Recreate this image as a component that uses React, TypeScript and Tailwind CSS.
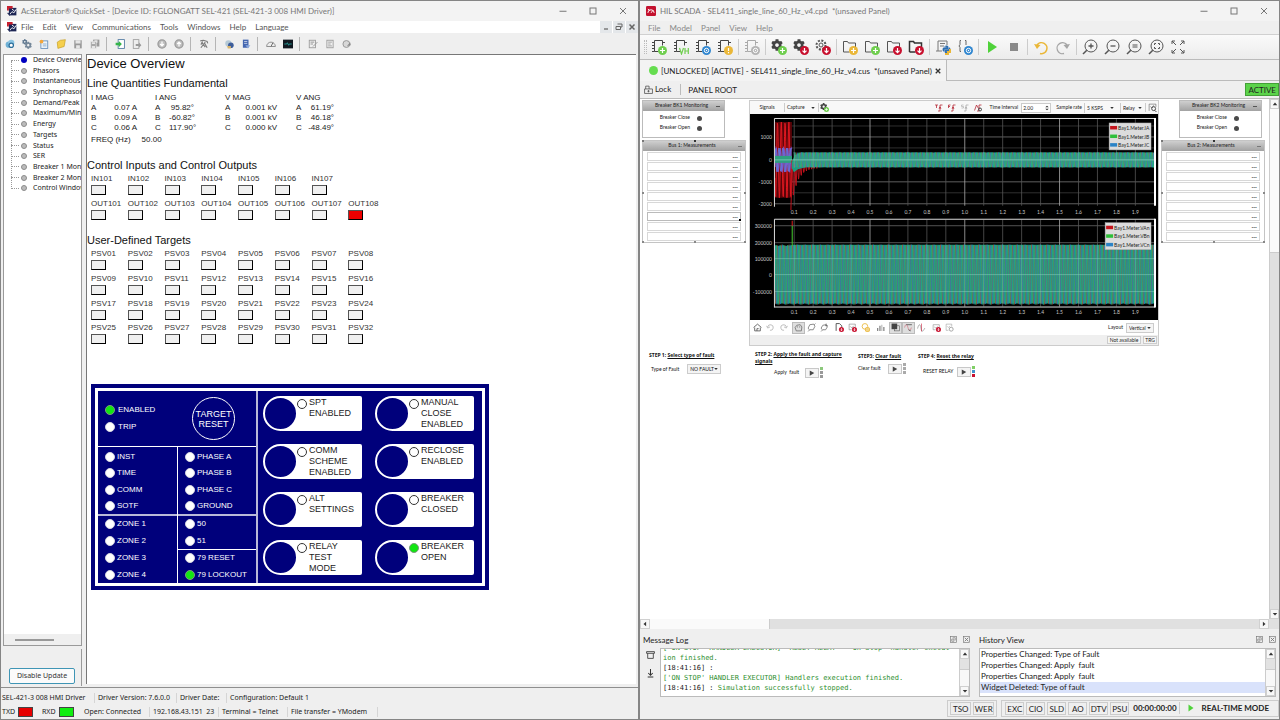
import React, { useMemo, useState } from 'react';
import { FaCog, FaPython } from 'react-icons/fa';
import { clsx } from 'clsx';

type IconProps = { children: React.ReactNode; className?: string };

const Svg: React.FC<IconProps> = ({ children, className }) => (
  <svg viewBox="0 0 16 16" className={clsx('shrink-0', className ?? 'w-4 h-4')} fill="none" aria-hidden="true">
    {children}
  </svg>
);

/* ---------- shared window chrome ---------- */

const WindowControls = () => (
  <div className="flex h-full items-center text-[#777]">
    <button type="button" aria-label="Minimize" className="w-[30px] flex justify-center">
      <Svg className="w-2 h-2"><path d="M1 8.5h14" stroke="currentColor" strokeWidth="2" /></Svg>
    </button>
    <button type="button" aria-label="Maximize" className="w-[30px] flex justify-center">
      <Svg className="w-2 h-2"><rect x="2" y="2" width="12" height="12" stroke="currentColor" strokeWidth="2" /></Svg>
    </button>
    <button type="button" aria-label="Close" className="w-[30px] flex justify-center">
      <Svg className="w-2 h-2"><path d="M2 2l12 12M14 2L2 14" stroke="currentColor" strokeWidth="2" /></Svg>
    </button>
  </div>
);

const SelLogo = () => (
  <Svg className="w-[10px] h-[10px]">
    <rect x="3" y="3" width="12" height="12" fill="#1c2554" />
    <path d="M0 0h9v4H3v3H0z" fill="#c8202f" />
    <path d="M4 14l4-5 3 2 4-6M8 5l4 3" stroke="#fff" strokeWidth="1.4" />
    <path d="M1 11l4 4" stroke="#1c2554" strokeWidth="2" />
  </Svg>
);

/* ---------- QuickSet toolbar ---------- */

const Gray = '#9a9a9a';

const quickSetIcons: { name: string; icon: React.ReactNode }[][] = [
  [
    { name: 'Connect', icon: <><circle cx="6" cy="9" r="5" fill="#6fb1d6" /><circle cx="10" cy="6" r="5" fill="#8cc5e3" /><circle cx="10" cy="10" r="3.5" fill="#fff" stroke="#2c6f9c" strokeWidth="2" /></> },
    { name: 'Settings', icon: <><FaCog x="0" y="0" size={9} color="#5f7890" /><FaCog x="4" y="4" size={12} color="#75889a" /></> },
    { name: 'New', icon: <><rect x="3" y="3" width="11" height="12" fill="#eef5fb" stroke="#5b87b5" strokeWidth="1.3" /><path d="M6 8h6M6 11h6" stroke="#5b87b5" /><circle cx="4" cy="4" r="3" fill="#f4a63a" /></> },
    { name: 'Open', icon: <path d="M2 5l5-3 8-1-2 11-10 3z" fill="#f5cf4d" stroke="#c29a1c" /> },
    { name: 'Save', icon: <><path d="M2 2h12v13H2z" fill={Gray} /><path d="M4 2h8v5H4zM5 10h6v5H5z" fill="#e6e6e6" /></> },
    { name: 'Save All', icon: <><path d="M5 1h10v11H5z" fill={Gray} /><path d="M7 2h5v4H7z" fill="#e6e6e6" /><path d="M1 4h9v11H1z" fill="#a8a8a8" stroke="#eee" /><path d="M3 5h5v3H3zM3 11h5v4H3z" fill="#e6e6e6" /></> },
  ],
  [
    { name: 'Read', icon: <><rect x="5" y="1" width="10" height="14" fill="#fff" stroke="#46719b" strokeWidth="1.3" /><path d="M1 6h5V3l5 5-5 5v-3H1z" fill="#35b44a" /></> },
    { name: 'Send', icon: <><rect x="2" y="1" width="9" height="14" fill="#eee" stroke={Gray} strokeWidth="1.3" /><path d="M6 8h5V5l4 5-4 4v-3H6z" fill={Gray} /></> },
  ],
  [
    { name: 'Back', icon: <><circle cx="8" cy="8" r="6.5" fill="#bdbdbd" stroke={Gray} strokeWidth="2" /><path d="M8 4v7M5 8l3 3 3-3" stroke="#fff" strokeWidth="2" /></> },
    { name: 'Forward', icon: <><circle cx="8" cy="8" r="6.5" fill="#bdbdbd" stroke={Gray} strokeWidth="2" /><path d="M8 12V5M5 8l3-3 3 3" stroke="#fff" strokeWidth="2" /></> },
  ],
  [{ name: 'Search', icon: <path d="M2 3l5-1 6 2 1 3M4 5l6 8M10 5L3 14M9 7l4 7M6 4l-3 5" stroke="#7d7d7d" strokeWidth="1.8" /> }],
  [
    { name: 'Terminal', icon: <><circle cx="7" cy="7" r="5" fill="#b5c9d6" /><circle cx="11" cy="10" r="4.5" fill="#3d5e9b" /><path d="M5 11h6v4H6z" fill="#d9b46b" /></> },
    { name: 'Database', icon: <><rect x="3" y="1" width="9" height="13" fill="#4466b0" /><path d="M5 4h5M5 7h5" stroke="#fff" /><path d="M7 10l4 5 4-5z" fill="#8ba8dc" /></> },
  ],
  [
    { name: 'HMI', icon: <><path d="M1 12a7 7 0 0114 0z" fill="#eee" stroke="#8b8b8b" strokeWidth="1.5" /><path d="M8 12l3-6" stroke="#666" strokeWidth="1.5" /></> },
    { name: 'Console', icon: <><rect x="0" y="1" width="16" height="14" fill="#101820" /><path d="M2 8h4l1-2 2 4 1-2h4" stroke="#28a6a0" strokeWidth="1.3" /></> },
  ],
  [
    { name: 'Edit', icon: <><rect x="2" y="2" width="10" height="12" stroke={Gray} strokeWidth="1.4" /><path d="M4 5h6M4 8h4M8 12l7-7" stroke={Gray} strokeWidth="1.6" /></> },
    { name: 'Report', icon: <><rect x="3" y="2" width="10" height="12" stroke={Gray} strokeWidth="1.4" /><path d="M5 5h6M5 8h4M5 11h6" stroke={Gray} strokeWidth="1.4" /></> },
    { name: 'Options', icon: <><circle cx="7" cy="8" r="5.5" fill="#d8d8d8" stroke={Gray} strokeWidth="1.6" /><path d="M8 11l5-6 1 5z" fill="#8a8a8a" /></> },
  ],
];

const treeItems = [
  'Device Overview', 'Phasors', 'Instantaneous', 'Synchrophasors', 'Demand/Peak', 'Maximum/Minimum', 'Energy',
  'Targets', 'Status', 'SER', 'Breaker 1 Monitor', 'Breaker 2 Monitor', 'Control Window',
];

const quantities = [
  ['A', '0.07 A', '95.82°', '0.001 kV', '61.19°'],
  ['B', '0.09 A', '-60.82°', '0.001 kV', '46.18°'],
  ['C', '0.06 A', '117.90°', '0.000 kV', '-48.49°'],
];

const inputs = ['IN101', 'IN102', 'IN103', 'IN104', 'IN105', 'IN106', 'IN107'];
const outputs = ['OUT101', 'OUT102', 'OUT103', 'OUT104', 'OUT105', 'OUT106', 'OUT107', 'OUT108'];
const targets = Array.from({ length: 32 }, (_, i) => `PSV${String(i + 1).padStart(2, '0')}`);

const Indicator: React.FC<{ label: string; on?: boolean }> = ({ label, on }) => (
  <div className="text-[8px] leading-[10px] text-[#333]">
    <div>{label}</div>
    <div
      className={clsx(
        'w-[15px] h-[10px] mt-px border border-[#555] border-b-black border-r-black',
        on ? 'bg-[#ee0000]' : 'bg-[#f0f0f0]'
      )}
    />
  </div>
);

const Led: React.FC<{ on?: boolean; outlined?: boolean }> = ({ on, outlined }) => (
  <span
    className={clsx(
      'block w-[10px] h-[10px] shrink-0 rounded-full border',
      on ? 'bg-[#12e612] border-[#7d9a7d]' : 'bg-white',
      !on && (outlined ? 'border-[#333]' : 'border-[#d5d5e0]')
    )}
  />
);

const LedRow: React.FC<{ label: string; on?: boolean }> = ({ label, on }) => (
  <div className="flex items-center gap-[2px] pl-[7px]">
    <Led on={on} />
    <span>{label}</span>
  </div>
);

const frontButtons = [
  { lines: ['SPT', 'ENABLED'] },
  { lines: ['MANUAL', 'CLOSE', 'ENABLED'] },
  { lines: ['COMM', 'SCHEME', 'ENABLED'] },
  { lines: ['RECLOSE', 'ENABLED'] },
  { lines: ['ALT', 'SETTINGS'] },
  { lines: ['BREAKER', 'CLOSED'] },
  { lines: ['RELAY', 'TEST', 'MODE'] },
  { lines: ['BREAKER', 'OPEN'], on: true },
];

const FrontPanel = () => (
  <div className="w-[398px] bg-[#00007b] p-1 text-white">
    <div className="flex border-[3px] border-white h-[198px]">
      <div className="w-[160px] flex flex-col border-r-2 border-[#b9b9d8] text-[8px] leading-[10px]">
        <div className="h-[56px] flex justify-between border-b border-white pr-[21px]">
          <div className="pt-[14px] pl-[7px] flex flex-col gap-[7px]">
            <div className="flex items-center gap-[3px]"><Led on /><span>ENABLED</span></div>
            <div className="flex items-center gap-[3px]"><Led /><span>TRIP</span></div>
          </div>
          <button type="button" className="mt-[6px] w-[43px] h-[43px] rounded-full border border-white text-[9px] leading-[10px]">
            TARGET<br />RESET
          </button>
        </div>
        <div className="flex-1 flex">
          <div className="w-[80px] flex flex-col border-r border-white">
            <div className="h-[69px] pt-[2px] grid grid-rows-4 border-b-2 border-[#b9b9d8]">
              <LedRow label="INST" /><LedRow label="TIME" /><LedRow label="COMM" /><LedRow label="SOTF" />
            </div>
            <div className="flex-1 grid grid-rows-4">
              <LedRow label="ZONE 1" /><LedRow label="ZONE 2" /><LedRow label="ZONE 3" /><LedRow label="ZONE 4" />
            </div>
          </div>
          <div className="flex-1 flex flex-col">
            <div className="h-[69px] pt-[2px] grid grid-rows-4 border-b-2 border-[#b9b9d8]">
              <LedRow label="PHASE A" /><LedRow label="PHASE B" /><LedRow label="PHASE C" /><LedRow label="GROUND" />
            </div>
            <div className="flex-1 grid grid-rows-2 border-b border-white">
              <LedRow label="50" /><LedRow label="51" />
            </div>
            <div className="flex-1 grid grid-rows-2">
              <LedRow label="79 RESET" /><LedRow label="79 LOCKOUT" on />
            </div>
          </div>
        </div>
      </div>
      <div className="flex-1 grid grid-cols-2 grid-rows-4 gap-x-[13px] gap-y-[13px] pl-[5px] pr-[8px] pt-[5px] pb-[8px]">
        {frontButtons.map(b => (
          <div key={b.lines.join(' ')} className="flex">
            <button
              type="button"
              aria-label={b.lines.join(' ')}
              className="z-10 -mr-[18px] w-[35px] h-[35px] shrink-0 rounded-full bg-[#00007b] border-2 border-white"
            />
            <div className="flex-1 flex gap-[2px] bg-white text-[#222] rounded-[2px] pl-[17px]">
              <div className="pt-[3px]"><Led on={b.on} outlined /></div>
              <div className="pt-px text-[9px] leading-[11px]">
                {b.lines.map(l => <div key={l}>{l}</div>)}
              </div>
            </div>
          </div>
        ))}
      </div>
    </div>
  </div>
);

const QuickSetWindow = () => {
  const [selected, setSelected] = useState(0);

  return (
    <section className="w-1/2 flex flex-col bg-[#efefef] border border-[#858585] border-r-2 min-w-0">
      <header className="h-5 flex items-center justify-between bg-[#f3f3f3] pl-[6px] text-[8px] text-[#777]">
        <div className="flex items-center gap-1 whitespace-nowrap">
          <SelLogo />
          <span>AcSELerator® QuickSet - [Device ID: FGLONGATT SEL-421 (SEL-421-3 008 HMI Driver)]</span>
        </div>
        <WindowControls />
      </header>

      <nav className="h-[12px] flex items-center justify-between bg-white pl-[6px] text-[8px] leading-[12px] text-[#555]">
        <div className="flex items-center">
          <SelLogo />
          <div className="flex gap-[9px] pl-1">
            {['File', 'Edit', 'View', 'Communications', 'Tools', 'Windows', 'Help', 'Language'].map(m => (
              <button key={m} type="button">{m}</button>
            ))}
          </div>
        </div>
        <div className="flex gap-px text-[#666]">
          <button type="button" aria-label="Minimize child" className="w-[12px] h-[12px] grid place-items-center bg-[#e4e7ea]">
            <Svg className="w-2 h-2"><path d="M4 12h8" stroke="currentColor" strokeWidth="2.5" /></Svg>
          </button>
          <button type="button" aria-label="Restore child" className="w-[12px] h-[12px] grid place-items-center bg-[#e4e7ea]">
            <Svg className="w-2 h-2"><path d="M5 2h9v6h-3M2 7h9v6H2z" stroke="currentColor" strokeWidth="2" /></Svg>
          </button>
          <button type="button" aria-label="Close child" className="w-[12px] h-[12px] grid place-items-center bg-[#e4e7ea]">
            <Svg className="w-2 h-2"><path d="M3 3l10 10M13 3L3 13" stroke="currentColor" strokeWidth="3" /></Svg>
          </button>
        </div>
      </nav>

      <div className="h-[21px] flex items-center">
        {quickSetIcons.map((group, gi) => (
          <React.Fragment key={gi}>
            {gi > 0 && <div className="w-px h-[14px] bg-[#b5b5b5] ml-[3px] mr-1" />}
            {group.map(({ name, icon }) => (
              <button key={name} type="button" aria-label={name} className="w-[17px] flex justify-center">
                <Svg className="w-[10px] h-[10px]">{icon}</Svg>
              </button>
            ))}
          </React.Fragment>
        ))}
      </div>

      <div className="flex-1 flex">
        <aside className="w-[79px] ml-[2px] pb-px flex flex-col font-['Noto_Sans',sans-serif]">
          <div className="flex-1 flex flex-col border border-[#9a9a9a] bg-white overflow-hidden">
            <div className="flex-1">
              <ul className="relative h-[139px] grid grid-rows-13 text-[7px] leading-[10px] text-[#222]">
                <li aria-hidden="true" className="absolute left-[7px] top-[6px] h-[128px] border-l border-dotted border-[#999]" />
                {treeItems.map((item, i) => (
                  <li key={item} className="overflow-hidden">
                    <button
                      type="button"
                      onClick={() => setSelected(i)}
                      className="w-full flex items-center pl-[7px] whitespace-nowrap"
                    >
                      <span className="w-[8px] shrink-0 border-t border-dotted border-[#999]" />
                      <span
                        className={clsx(
                          'w-[6px] h-[6px] mx-[2px] rounded-full shrink-0',
                          i === selected ? 'bg-[#0000c0]' : 'bg-[#bcbcbc] border border-[#8c8c8c]'
                        )}
                      />
                      <span className="pl-[4px]">{item}</span>
                    </button>
                  </li>
                ))}
              </ul>
            </div>
            <div className="h-[11px] flex items-center bg-[#efefef] pl-[11px]">
              <div className="w-[39px] h-[2px] bg-[#999]" />
            </div>
          </div>
          <div className="h-[37px] mt-[3px] pb-[2px] flex items-end justify-center border-r border-[#9a9a9a]">
            <button type="button" className="w-[66px] h-4 rounded-[2px] border border-[#3f95b5] bg-[#fbfbfb] text-[7px] text-[#333]">
              Disable Update
            </button>
          </div>
        </aside>

        <main className="flex-1 ml-[4px] mr-[2px] mb-[3px] bg-white border-t border-l border-[#777] text-[#111] font-['Liberation_Sans',sans-serif]">
          <h1 className="pt-px text-[13px] leading-[16px]">Device Overview</h1>
          <h2 className="mt-[3px] text-[11px] leading-[16px]">Line Quantities Fundamental</h2>
          <div className="ml-1 text-[8px] leading-[10px] text-[#222]">
            <table className="w-[243px] table-fixed mt-px">
              <colgroup>
                <col className="w-[14px]" /><col className="w-[50px]" />
                <col className="w-[14px]" /><col className="w-[56px]" />
                <col className="w-[14px]" /><col className="w-[57px]" />
                <col className="w-[10px]" /><col className="w-[28px]" />
              </colgroup>
              <thead>
                <tr className="text-left leading-[11px]">
                  {['I MAG', 'I ANG', 'V MAG', 'V ANG'].map(h => <th key={h} colSpan={2} className="font-normal">{h}</th>)}
                </tr>
              </thead>
              <tbody>
                {quantities.map(([p, im, ia, vm, va]) => (
                  <tr key={p}>
                    <td>{p}</td><td className="text-right pr-[18px] whitespace-nowrap">{im}</td>
                    <td>{p}</td><td className="text-right pr-[31px] whitespace-nowrap">{ia}</td>
                    <td>{p}</td><td className="text-right pr-[19px] whitespace-nowrap">{vm}</td>
                    <td>{p}</td><td className="text-right whitespace-nowrap">{va}</td>
                  </tr>
                ))}
              </tbody>
            </table>
            <div className="mt-[2px] flex gap-[11px]"><span>FREQ (Hz)</span><span>50.00</span></div>
          </div>

          <h2 className="mt-[12px] text-[11px] leading-[16px]">Control Inputs and Control Outputs</h2>
          <div className="ml-1 mt-px w-[294px] grid grid-cols-8 gap-y-1">
            {inputs.map(n => <Indicator key={n} label={n} />)}
            <span />
            {outputs.map(n => <Indicator key={n} label={n} on={n === 'OUT108'} />)}
          </div>

          <h2 className="mt-[12px] text-[11px] leading-[16px]">User-Defined Targets</h2>
          <div className="ml-1 mt-px w-[294px] h-[99px] grid grid-cols-8 grid-rows-4">
            {targets.map(n => <Indicator key={n} label={n} />)}
          </div>

          <div className="ml-1 mt-[36px]"><FrontPanel /></div>
        </main>
      </div>

      <footer className="border-t border-[#8f8f8f] pt-[3px] text-[7px] text-[#222] whitespace-nowrap font-['Noto_Sans',sans-serif]">
        <div className="h-[14px] flex items-center">
          <span className="w-[94px] pl-px border-r border-[#d5d5d5]">SEL-421-3 008 HMI Driver</span>
          <span className="w-[82px] pl-[3px] border-r border-[#d5d5d5]">Driver Version: 7.6.0.0</span>
          <span className="w-[50px] pl-[3px] border-r border-[#d5d5d5]">Driver Date:</span>
          <span className="pl-[3px]">Configuration: Default 1</span>
        </div>
        <div className="h-[14px] flex items-center">
          <span className="w-[17px] pl-px">TXD</span>
          <span className="w-[15px] h-[10px] bg-[#e60000] border border-[#444]" />
          <span className="w-[26px] pl-[9px]">RXD</span>
          <span className="w-[15px] h-[10px] bg-[#11ee11] border border-[#444]" />
          <span className="w-[76px] pl-[10px] border-r border-[#d5d5d5]">Open: Connected</span>
          <span className="w-[69px] pl-[3px] border-r border-[#d5d5d5]">192.168.43.151&nbsp; 23</span>
          <span className="w-[69px] pl-[3px] border-r border-[#d5d5d5]">Terminal = Telnet</span>
          <span className="w-[90px] pl-[3px] border-r border-[#d5d5d5]">File transfer = YModem</span>
        </div>
      </footer>
    </section>
  );
};

/* ---------- HIL SCADA toolbar ---------- */

const Chip: React.FC<{ color?: string }> = ({ color = '#444' }) => (
  <g stroke={color} strokeWidth="1">
    <path d="M3.5 1.5h8v5M3.5 1.5v11h4" />
    <path d="M1 3.5h2.500M1 6.500h2.500M1 9.500h2.500M1 12.500h2.500M11.500 3.500H14" strokeWidth="1.200" />
  </g>
);

const Panel: React.FC<{ color?: string; width?: number }> = ({ color = '#555', width = 1 }) => (
  <path d="M1.500 13V2.500h4l1 1.500h7v4M1.500 13h6" stroke={color} strokeWidth={width} />
);

const Badge: React.FC<{ color: string; glyph: 'plus' | 'down' | 'sync' | 'bang' }> = ({ color, glyph }) => (
  <g>
    <circle cx="11.500" cy="11.500" r="4.500" fill={color} />
    {glyph === 'plus' && <path d="M11.500 9v5M9 11.500h5" stroke="#fff" strokeWidth="1.200" />}
    {glyph === 'down' && <path d="M11.500 9v4.500M9.500 11.700l2 2 2-2" stroke="#fff" strokeWidth="1.200" />}
    {glyph === 'sync' && <><circle cx="11.500" cy="11.500" r="2.200" stroke="#fff" /><circle cx="11.500" cy="11.500" r=".7" fill="#fff" /></>}
    {glyph === 'bang' && <path d="M11.500 9v3M11.500 13v1.200" stroke="#fff" strokeWidth="1.200" />}
  </g>
);

const Lens: React.FC<{ children: React.ReactNode }> = ({ children }) => (
  <g stroke="#555" strokeWidth="1">
    <circle cx="9" cy="7" r="6" />
    <path d="M4.800 11.200L1 15" strokeWidth="1.500" />
    {children}
  </g>
);

const green = '#6fce4e';
const red = '#c8102e';
const blue = '#2f86d0';
const amber = '#eab738';

const scadaIcons: { name: string; icon: React.ReactNode }[][] = [
  [
    { name: 'Add model', icon: <><Chip /><Badge color={green} glyph="plus" /></> },
    { name: 'Virtual HIL', icon: <><Chip /><path d="M6.500 9l2 6 2-6M12 9v6M15.300 9v6M12 12h3.300" stroke={green} strokeWidth="1.200" /></> },
    { name: 'Reload model', icon: <><Chip /><Badge color={blue} glyph="sync" /></> },
    { name: 'Model info', icon: <><Chip /><Badge color={amber} glyph="bang" /></> },
  ],
  [{ name: 'Model settings', icon: <><Chip color="#aaa" /><Badge color="#b3b3b3" glyph="sync" /></> }],
  [
    { name: 'Add settings', icon: <><FaCog x="0" y="0" size={12} color="#444" /><Badge color={green} glyph="plus" /></> },
    { name: 'Load settings', icon: <><FaCog x="0" y="0" size={12} color="#444" /><Badge color={red} glyph="down" /></> },
    { name: 'Save settings', icon: <><circle cx="6" cy="6" r="4.500" stroke="#555" strokeWidth="2" strokeDasharray="2 1.500" /><circle cx="6" cy="6" r="2" stroke="#555" /><Badge color={red} glyph="down" /></> },
  ],
  [
    { name: 'New panel', icon: <><Panel /><Badge color={amber} glyph="plus" /></> },
    { name: 'Open panel', icon: <><Panel /><Badge color={green} glyph="plus" /></> },
    { name: 'Save panel', icon: <><Panel /><Badge color={red} glyph="down" /></> },
    { name: 'Save panel as', icon: <><Panel color="#333" width={1.5} /><Badge color={red} glyph="down" /></> },
  ],
  [
    { name: 'Script', icon: <><path d="M3 12V2h9v4M5 4.500h5M5 7h4M1 12h6" stroke="#777" /><FaPython x="7" y="6" size={9} color="#2f6fb0" /><path d="M10 15h3v-2h2v-3" stroke={amber} strokeWidth="2" /></> },
    { name: 'Reload script', icon: <><path d="M4 1.500H3v4L2 7l1 1.500v4h1M8 1.500h1V6" stroke="#666" /><Badge color={blue} glyph="sync" /></> },
  ],
  [
    { name: 'Run', icon: <path d="M4 2l9 6-9 6z" fill="#4fd23a" /> },
    { name: 'Stop', icon: <rect x="4" y="4" width="8" height="8" fill="#8a8a8a" /> },
  ],
  [
    { name: 'Undo', icon: <><path d="M4 6a5.500 5.500 0 113 8.500" stroke={amber} strokeWidth="1.600" /><path d="M1 5l3 5 3.500-4z" fill={amber} /></> },
    { name: 'Redo', icon: <><path d="M12 6a5.500 5.500 0 10-3 8.500" stroke="#a5a5a5" strokeWidth="1.300" /><path d="M15 5l-3 5-3.500-4z" fill="#a5a5a5" /></> },
  ],
  [
    { name: 'Zoom in', icon: <Lens><path d="M9 4.500v5M6.500 7h5" strokeWidth="1.300" /></Lens> },
    { name: 'Zoom out', icon: <Lens><path d="M6.500 7h5" strokeWidth="1.300" /></Lens> },
    { name: 'Zoom reset', icon: <Lens><path d="M6.500 6h5M6.500 8h5" strokeWidth="1.200" /></Lens> },
    { name: 'Zoom fit', icon: <Lens><path d="M6.500 6V4.500H8M10 4.500h1.500V6M11.500 8v1.500H10M8 9.500H6.500V8" /></Lens> },
    { name: 'Full screen', icon: <path d="M2 5V2h3M2 2l4 4M11 2h3v3M14 2l-4 4M14 11v3h-3M14 14l-4-4M5 14H2v-3M2 14l4-4" stroke="#555" /> },
  ],
];

/* ---------- capture plot ---------- */

type Curve = (x: number) => number;

// samples one phase of a sine wave as an SVG polyline
const wave = (from: number, to: number, mid: Curve, amp: Curve, phase: number, period = 3.8) => {
  const pts: string[] = [];
  for (let x = from; x <= to; x += 0.4) {
    pts.push(`${x.toFixed(1)},${(mid(x) - amp(x) * Math.sin((x * 2 * Math.PI) / period + phase)).toFixed(1)}`);
  }
  return pts.join(' ');
};

const xTicks = Array.from({ length: 19 }, (_, i) => i + 1);

// lower edge of the offset current while the fault decays
const decay: Curve = x => 54 + 36 * Math.exp(-(x - 42) / 6);

const Legend: React.FC<{ x: number; y: number; width: number; names: string[] }> = ({ x, y, width, names }) => (
  <g>
    <rect x={x} y={y} width={width} height="27" fill="#dcdcdc" stroke="#aaa" strokeWidth=".5" />
    {names.map((n, i) => (
      <g key={n}>
        <rect x={x + 1} y={y + 3 + i * 8.6} width="7" height="3.500" fill={['#c4141c', '#2fbf3a', '#2b83c6'][i]} />
        <text x={x + 9} y={y + 7 + i * 8.6} fontSize="5" fill="#222">{n}</text>
      </g>
    ))}
  </g>
);

const CapturePlot = () => {
  const current = useMemo(() => {
    const zero: Curve = () => 46;
    const load: Curve = () => 7.5;
    return {
      fault: wave(25, 42, zero, () => 38, 0),
      faultB: wave(25, 42, zero, () => 12, 2),
      faultC: wave(25, 42, zero, () => 12, 4),
      decay: wave(41, 68, x => (46 + decay(x)) / 2, x => (decay(x) - 46) / 2, 0, 2.6),
      a: wave(44, 405, zero, load, 0),
      b: wave(44, 405, zero, load, 2.09),
      c: wave(44, 405, zero, load, 4.19),
    };
  }, []);
  const voltage = useMemo(() => [0, 2.09, 4.19].map(p => wave(25, 405, () => 161, () => 30, p)), []);

  return (
    <svg viewBox="0 0 409 207" className="block w-full bg-black font-['Lato',sans-serif]" role="img" aria-label="Captured currents and voltages">
      {[12, 23, 34, 68, 79, 90].map(y => <path key={y} d={`M25 ${y}H405`} stroke={y === 23 || y === 68 || y === 90 ? '#888' : '#444'} strokeWidth=".7" />)}
      {[112, 129].map(y => <path key={y} d={`M25 ${y}H405`} stroke="#777" strokeWidth=".7" />)}
      {xTicks.map(i => (
        <path
          key={i}
          d={`M${25.3 + i * 19} 5V92M${25.3 + i * 19} 106V193`}
          stroke={i % 5 === 0 ? '#aaa' : '#555'}
          strokeWidth=".8"
        />
      ))}

      {/* fault current, then the decay back to load current */}
      <path d="M25 84V8h17v76z" fill="#5a0408" />
      <polyline points={current.fault} stroke="#e01820" strokeWidth="1" fill="none" />
      <polyline points={current.faultB} stroke="#7a5ad0" strokeWidth="1.200" fill="none" />
      <polyline points={current.faultC} stroke="#5f74d8" strokeWidth="1" fill="none" />
      <rect x="25" y="42" width="17" height="7" fill="#2f9f80" />
      <polyline points={current.decay} stroke="#c0121c" strokeWidth="1" fill="none" />
      <path d="M42 48l3-7 6-2.500H405V53.500H56l-8 2-4 3-2-4z" fill="#1d9a82" />
      <polyline points={current.a} stroke="#b85a48" strokeWidth=".5" fill="none" />
      <polyline points={current.c} stroke="#2f86c8" strokeWidth=".6" fill="none" />
      <polyline points={current.b} stroke="#2bb870" strokeWidth=".7" fill="none" />
      <path d="M25 46H405" stroke="#8fd8c4" strokeWidth=".7" />

      {/* three phase voltages */}
      <path d="M25 132H42V131H405V190H25z" fill="#1b927e" />
      <polyline points={voltage[0]} stroke="#a4583c" strokeWidth=".6" fill="none" />
      <polyline points={voltage[2]} stroke="#2a7fc0" strokeWidth=".6" fill="none" />
      <polyline points={voltage[1]} stroke="#27b070" strokeWidth=".7" fill="none" />
      <path d="M25 145H405M25 161H405M25 178H405" stroke="#7cc8b4" strokeWidth=".6" />
      {xTicks.map(i => <path key={i} d={`M${25.3 + i * 19} 131V190M${25.3 + i * 19} 38V54`} stroke="#8fd0c0" strokeWidth=".5" opacity=".6" />)}
      <path d="M42.300 112v20" stroke="#46d030" strokeWidth="1" />
      <path d="M42.300 107v5" stroke="#e01c1c" strokeWidth="1" />

      <path d="M24.500 93V4.500H406M24.500 194V105.500H406M24.500 193.500H406" stroke="#ddd" fill="none" />
      <path d="M406 4v88M406 105v89" stroke="#fff" strokeWidth="2" />

      <g fontSize="5" fill="#c8c8c8" textAnchor="end">
        <text x="22" y="25">1000</text>
        <text x="22" y="48">0</text>
        <text x="22" y="70">-1000</text>
        <text x="22" y="92">-2000</text>
        <text x="22" y="114">300000</text>
        <text x="22" y="131">200000</text>
        <text x="22" y="147">100000</text>
        <text x="22" y="163">0</text>
        <text x="22" y="180">-100000</text>
      </g>
      <g fontSize="5" fill="#c8c8c8" textAnchor="middle">
        {xTicks.map(i => <text key={i} x={25.3 + i * 19} y="100">{(i / 10).toFixed(1)}</text>)}
        {xTicks.map(i => <text key={i} x={25.3 + i * 19} y="200">{(i / 10).toFixed(1)}</text>)}
      </g>
      <Legend x={360} y={9} width={42} names={['Bay1.Meter.IA', 'Bay1.Meter.IB', 'Bay1.Meter.IC']} />
      <Legend x={356} y={109} width={46} names={['Bay1.Meter.VAn', 'Bay1.Meter.VBn', 'Bay1.Meter.VCn']} />
    </svg>
  );
};

const plotTools: { name: string; icon: React.ReactNode; active?: boolean; gap?: boolean }[] = [
  { name: 'Home', icon: <path d="M1 8l7-6 7 6M3 8v6h10V8M7 14v-4h3" stroke="#555" strokeWidth="1.500" /> },
  { name: 'Previous view', icon: <path d="M3 7a5 5 0 114 6M1 5l2 4 4-2" stroke="#aaa" strokeWidth="1.300" /> },
  { name: 'Next view', icon: <path d="M13 7a5 5 0 10-4 6M15 5l-2 4-4-2" stroke="#aaa" strokeWidth="1.300" /> },
  { name: 'Pan', icon: <path d="M4 14l-2-6 3-4 6-1 3 4-1 7zM6 6v2M10 6v2" stroke="#666" strokeWidth="1.300" />, active: true, gap: true },
  { name: 'Zoom', icon: <path d="M4 12L2 9l3-6 7-1 2 4-3 6H5l-3 3M13 3l2-2" stroke="#666" strokeWidth="1.300" /> },
  { name: 'Zoom region', icon: <path d="M4 12L2 9l3-5 6-1 2 4-3 5H5l-3 3M11 1v5M9 4l5 1" stroke="#666" strokeWidth="1.300" /> },
  { name: 'Export', icon: <><path d="M2 14V1h6l4 4v3" stroke="#444" strokeWidth="1.500" /><Badge color={red} glyph="down" /></>, gap: true },
  { name: 'Import', icon: <><path d="M2 2h11v5M2 2v10h4M4 6l3 3 3-4" stroke="#777" /><Badge color={red} glyph="down" /></> },
  { name: 'Reload', icon: <><circle cx="7" cy="6" r="5" stroke={amber} strokeWidth="1.500" /><Badge color={amber} glyph="sync" /></> },
  { name: 'Statistics', icon: <path d="M2 14V9h2v5zM6 14V5h2v9zM10 14V3h1v11zM13 14V7h2v7z" fill="#777" />, gap: true },
  { name: 'Layers', icon: <><rect x="6" y="5" width="9" height="9" stroke="#555" /><rect x="1" y="1" width="10" height="10" fill="#444" /></>, active: true, gap: true },
  { name: 'Cursor', icon: <><path d="M1 8c2-7 4-7 6 0s4 7 6 0" stroke="#d05868" /><path d="M4 3h10M8 12l4 2" stroke="#555" strokeWidth="1.500" /></>, active: true },
  { name: 'Marker', icon: <><path d="M1 10c2-9 5-9 6-1s3 7 7 0" stroke="#777" /><path d="M8 1v14" stroke={red} /></> },
  { name: 'Save signals', icon: <><path d="M2 3h11v4M2 3v9h4M4 7l3 2 3-3" stroke="#888" /><Badge color={red} glyph="down" /></>, gap: true },
  { name: 'Signal settings', icon: <><path d="M2 2h10v4M2 2v11h4M4 6l2 2 3-3" stroke="#999" /><circle cx="11" cy="11" r="3.500" stroke="#999" strokeWidth="1.500" /></> },
];

const Trigger: React.FC<{ name: string; color: string; letter?: string }> = ({ name, color, letter }) => (
  <button type="button" aria-label={name} className="w-[13px] flex justify-center">
    <Svg className="w-2 h-2">
      {letter === 'F' && <path d="M1 8V2h4M1 5h3" stroke={color} strokeWidth="1.500" />}
      {letter === 'T' && <path d="M0 2h6M3 2v6" stroke={color} strokeWidth="1.500" />}
      {letter === 'S' && <path d="M5 2H1v3h4v3H1" stroke={color} strokeWidth="1.300" />}
      {!letter && <path d="M1 13L5 2l4 7" stroke={color} strokeWidth="1.500" />}
      <path d="M6 14h4V2h5" stroke={color} strokeWidth="1.500" />
      {!letter ? <circle cx="12" cy="11" r="3" stroke="#444" strokeWidth="2" /> : <path d="M7 9l3-4 3 4z" fill={color} />}
    </Svg>
  </button>
);

const Select: React.FC<{ id: string; value: string; label?: string; className: string }> = ({ id, value, label, className }) => (
  <span className={clsx('relative flex items-center h-[10px] border-[#ccc]', className)}>
    <select id={id} aria-label={label} className="appearance-none w-full h-full pl-[2px] leading-[8px] bg-transparent">
      <option>{value}</option>
    </select>
    <Svg className="absolute right-[2px] w-1 h-1 pointer-events-none"><path d="M1 4h14l-7 8z" fill="#333" /></Svg>
  </span>
);

const CaptureWidget = () => (
  <div className="flex-1 min-w-0 mt-px bg-[#efefef] border border-[#ccc] text-[5px] text-[#222]">
    <div className="h-[13px] flex items-center justify-between bg-[#f8f8f8] whitespace-nowrap">
      <div className="flex items-center h-full">
        <button type="button" className="w-[34px]">Signals</button>
        <button type="button" className="flex items-center border-x border-[#ccc] pl-[2px] pr-[3px] h-[9px]">
          Capture
          <Svg className="w-1 h-1 ml-[6px]"><path d="M1 4h14l-7 8z" fill="#333" /></Svg>
        </button>
        <button type="button" aria-label="Capture settings" className="w-[12px] h-[11px] grid place-items-center">
          <Svg className="w-[9px] h-[9px]"><FaCog x="0" y="0" size={13} color="#444" /><Badge color={green} glyph="plus" /></Svg>
        </button>
      </div>
      <div className="flex items-center">
        <Trigger name="Trigger" color="#b3202f" letter="T" />
        <Trigger name="Force trigger" color="#b3202f" letter="F" />
        <Trigger name="Stop capture" color="#aaaaaa" letter="S" />
        <Trigger name="Find trigger" color="#b3202f" />
        <label className="flex items-center gap-[3px] pl-[5px]">
          Time Interval
          <span className="relative flex items-center">
            <input type="text" inputMode="decimal" defaultValue="2.00" className="w-[30px] h-[10px] px-px border border-[#ccc] bg-white" />
            <Svg className="absolute right-[2px] w-[4px] h-[8px] pointer-events-none"><path d="M1 5l7-6 7 6zM1 11l7 6 7-6z" fill="#333" /></Svg>
          </span>
        </label>
        <label htmlFor="sample-rate" className="pl-[5px] pr-[2px]">Sample rate</label>
        <Select id="sample-rate" value="5 KSPS" className="w-[32px] border-l" />
        <Select id="trigger-source" label="Trigger source" value="Relay" className="w-[24px] ml-1 border-l" />
        <button type="button" aria-label="Inspect capture" className="w-[13px] ml-px grid place-items-center border-l border-[#ccc]">
          <Svg className="w-[9px] h-[9px]"><path d="M2 14V2h12v5M4 6l3 3 3-5" stroke="#555" /><circle cx="10" cy="10" r="3.500" stroke="#333" strokeWidth="1.500" /><path d="M12 13l3 3" stroke="#333" strokeWidth="1.500" /></Svg>
        </button>
      </div>
    </div>

    <CapturePlot />

    <div className="h-[15px] flex items-center justify-between bg-white pl-px pr-1">
      <div className="flex items-center">
        {plotTools.map(t => (
          <button
            key={t.name}
            type="button"
            aria-label={t.name}
            className={clsx('w-[13px] h-[12px] grid place-items-center', t.gap && 'ml-[2px]', t.active && 'bg-[#dedede] border border-[#bbb]')}
          >
            <Svg className="w-[9px] h-[9px]">{t.icon}</Svg>
          </button>
        ))}
      </div>
      <div className="flex items-center gap-[3px]">
        <label htmlFor="plot-layout">Layout</label>
        <Select id="plot-layout" value="Vertical" className="w-[28px] border bg-[#f5f5f5]" />
      </div>
    </div>
    <div className="h-[10px] flex items-center justify-end gap-[2px] pr-px">
      <span className="px-[2px] h-[8px] leading-[7px] border border-[#ccc] bg-[#f5f5f5]">Not available</span>
      <span className="px-px h-[8px] leading-[7px] border border-[#ccc] bg-[#f5f5f5]">TRG</span>
    </div>
  </div>
);

const BreakerGroup: React.FC<{ id: string }> = ({ id }) => (
  <div className="w-[83px] h-[38px] border border-[#bbb] bg-white text-[5px] text-[#222]">
    <div className="h-[10px] flex items-center justify-between px-1 bg-linear-to-b from-[#cfcfcf] to-[#a2a2a2]">
      <span className="flex-1 text-center">Breaker {id} Monitoring</span>
      <span className="w-1 h-px bg-[#555]" />
    </div>
    <div className="pt-[2px]">
      {['Breaker Close', 'Breaker Open'].map(n => (
        <div key={n} className="h-[10px] flex items-center justify-end gap-[7px] pr-[22px]">
          <span>{n}</span>
          <span className="w-[5px] h-[5px] rounded-full bg-[#4a4a4a]" />
        </div>
      ))}
    </div>
  </div>
);

const Handle: React.FC<{ className: string }> = ({ className }) => (
  <span className={clsx('absolute w-[2px] h-[2px]', className)} />
);

const BusGroup: React.FC<{ title: string; rowSelected?: boolean }> = ({ title, rowSelected }) => (
  <div className="relative w-[104px] border border-[#c4c4c4] bg-white text-[5px] text-[#222]">
    <Handle className="-left-px -top-px bg-[#777]" />
    <Handle className="left-1/2 -top-px bg-[#333]" />
    <Handle className="-left-px top-1/2 bg-[#888]" />
    <Handle className="-right-px top-1/2 bg-[#888]" />
    <Handle className="-left-px -bottom-px bg-[#888]" />
    <Handle className="left-1/2 -bottom-px bg-[#888]" />
    <Handle className="-right-px -bottom-px bg-[#888]" />
    <div className="h-[10px] flex items-center justify-between px-[3px] bg-linear-to-b from-[#cfcfcf] to-[#a2a2a2]">
      <span className="flex-1 text-center">{title}</span>
      <span className="w-1 h-px bg-[#777]" />
    </div>
    <div className="px-[4px] pt-px pb-px flex flex-col gap-px">
      {Array.from({ length: 9 }, (_, i) => (
        <div
          key={i}
          className={clsx(
            'relative h-[9px] leading-[8px] px-[2px] border text-right font-bold',
            rowSelected && i === 6 ? 'border-[#bbb]' : 'border-[#d8d8d8]'
          )}
        >
          ---
          {rowSelected && i === 6 && <Handle className="-right-px -bottom-px bg-black" />}
        </div>
      ))}
    </div>
  </div>
);

const ScriptButton: React.FC<{ name: string; leds: string[] }> = ({ name, leds }) => (
  <div className="flex items-center gap-px">
    <button type="button" aria-label={name} className="w-[14px] h-[10px] grid place-items-center border border-[#c8c8c8] bg-[#f4f4f4]">
      <Svg className="w-[6px] h-[6px]"><path d="M2 1l12 7-12 7z" fill="#444" /></Svg>
    </button>
    <div className="flex flex-col gap-px">
      {leds.map((c, i) => <span key={i} className={clsx('w-[3px] h-[3px]', c)} />)}
    </div>
  </div>
);

const StepTitle: React.FC<{ step: string; children: React.ReactNode }> = ({ step, children }) => (
  <p className="font-bold font-['Noto_Sans',sans-serif]">{step} <u>{children}</u></p>
);

const Steps = () => (
  <div className="flex items-start pl-[9px] pt-[5px] text-[5px] leading-[7px] text-[#111] whitespace-nowrap">
    <div className="w-[106px] pt-px">
      <StepTitle step="STEP 1:">Select type of fault</StepTitle>
      <div className="mt-[5px] pl-[2px] flex items-center gap-[8px]">
        <label htmlFor="fault-type">Type of Fault</label>
        <Select id="fault-type" value="NO FAULT" className="w-[34px] border bg-[#f4f4f4]" />
      </div>
    </div>
    <div className="w-[103px]">
      <div className="w-[98px] whitespace-normal">
        <StepTitle step="STEP 2:">Apply the fault and capture signals</StepTitle>
      </div>
      <div className="mt-[2px] pl-[19px] flex items-center gap-[6px]">
        <span>Apply&nbsp; fault</span>
        <ScriptButton name="Apply fault" leds={['bg-[#8cc87c]', 'bg-[#999]', 'bg-[#999]']} />
      </div>
    </div>
    <div className="w-[60px] pt-[2px]">
      <StepTitle step="STEP3:">Clear fault</StepTitle>
      <div className="mt-[3px] flex items-center gap-[7px]">
        <span>Clear fault</span>
        <ScriptButton name="Clear fault" leds={['bg-[#aaa]', 'bg-[#aaa]', 'bg-[#aaa]']} />
      </div>
    </div>
    <div className="pt-[2px]">
      <StepTitle step="STEP 4:">Reset the relay</StepTitle>
      <div className="mt-[6px] pl-[5px] flex items-center gap-[4px]">
        <span>RESET RELAY</span>
        <ScriptButton name="Reset relay" leds={['bg-[#7fd065]', 'bg-[#3f92cc]', 'bg-[#c8102e]']} />
      </div>
    </div>
  </div>
);

const Arrow: React.FC<{ dir: 'up' | 'down' | 'left' | 'right' }> = ({ dir }) => (
  <button type="button" aria-label={`Scroll ${dir}`} className="w-full h-[10px] max-w-[10px] grid place-items-center bg-[#f8f8f8] border border-[#d0d0d0] shrink-0">
    <Svg className="w-[6px] h-[6px]">
      {dir === 'up' && <path d="M2 11h12L8 4z" fill="#333" />}
      {dir === 'down' && <path d="M2 5h12l-6 7z" fill="#333" />}
      {dir === 'left' && <path d="M11 2v12L4 8z" fill="#333" />}
      {dir === 'right' && <path d="M5 2v12l7-6z" fill="#333" />}
    </Svg>
  </button>
);

const DockTitle: React.FC<{ title: string }> = ({ title }) => (
  <div className="h-[17px] flex items-center justify-between text-[8px] text-[#222]">
    <h2>{title}</h2>
    <div className="flex gap-[6px] text-[#777]">
      <button type="button" aria-label={`Float ${title}`}>
        <Svg className="w-[7px] h-[7px]"><rect x="1" y="1" width="14" height="14" stroke="currentColor" strokeWidth="1.500" /><path d="M6 4h6v6M4 7h5v5H4z" stroke="currentColor" strokeWidth="1.500" /></Svg>
      </button>
      <button type="button" aria-label={`Close ${title}`}>
        <Svg className="w-[7px] h-[7px]"><rect x="1" y="1" width="14" height="14" stroke="currentColor" strokeWidth="1.500" /><path d="M4 4l8 8M12 4l-8 8" stroke="currentColor" strokeWidth="2" /></Svg>
      </button>
    </div>
  </div>
);

const DockScroll = () => (
  <div className="w-[10px] flex flex-col bg-[#f8f8f8] border-l border-[#ccc]">
    <Arrow dir="up" />
    <div className="h-[11px] bg-[#e2e2e2] border-b border-[#ccc]" />
    <div className="flex-1" />
    <Arrow dir="down" />
  </div>
);

const history = [
  'Properties Changed: Type of Fault',
  'Properties Changed: Apply\u00a0 fault',
  'Properties Changed: Apply\u00a0 fault',
  'Widget Deleted: Type of fault',
];

const ScadaWindow = () => (
  <section className="w-1/2 flex flex-col bg-[#efefef] border-y border-r border-[#858585] min-w-0">
    <header className="h-5 flex items-center justify-between bg-[#f3f3f3] pl-[6px] text-[8px] text-[#777]">
      <div className="flex items-center gap-1 whitespace-nowrap">
        <Svg className="w-[10px] h-[10px]">
          <rect width="16" height="16" rx="2" fill="#c4122f" />
          <path d="M3 11a5 5 0 0110 0M8 11l3-4M3 5l3 2" stroke="#fff" strokeWidth="1.500" />
        </Svg>
        <span>HIL SCADA - SEL411_single_line_60_Hz_v4.cpd&nbsp; *(unsaved Panel)</span>
      </div>
      <WindowControls />
    </header>

    <nav className="h-[13px] flex items-center gap-[9px] pl-[8px] text-[8px] leading-[12px] text-[#888]">
      {['File', 'Model', 'Panel', 'View', 'Help'].map(m => <button key={m} type="button">{m}</button>)}
    </nav>

    <div className="h-[26px] flex items-center border-y border-[#d0d0d0] border-b-[#bbb] bg-linear-to-b from-[#fafafa] to-[#ececec] pl-1">
      <span className="w-[3px] h-[14px] border-x border-dotted border-[#bbb] mr-px" />
      {scadaIcons.map((group, gi) => (
        <React.Fragment key={gi}>
          {gi > 0 && <span className="w-px h-4 bg-[#ccc] mx-[2px]" />}
          {group.map(({ name, icon }) => (
            <button key={name} type="button" aria-label={name} className="w-[22px] flex justify-center">
              <Svg>{icon}</Svg>
            </button>
          ))}
        </React.Fragment>
      ))}
    </div>

    <div className="h-[21px] flex text-[8px] text-[#222]">
      <div className="w-[307px] flex items-center gap-[3px] pl-[9px] bg-[#f3f3f3] border-r border-[#bbb] whitespace-nowrap">
        <span className="w-[9px] h-[9px] shrink-0 rounded-full bg-[#66dd50]" />
        <span>[UNLOCKED] [ACTIVE] - SEL411_single_line_60_Hz_v4.cus&nbsp; *(unsaved Panel)</span>
        <button type="button" aria-label="Close panel">
          <Svg className="w-[6px] h-[6px]"><path d="M2 2l12 12M14 2L2 14" stroke="#333" strokeWidth="3.500" /></Svg>
        </button>
      </div>
      <div className="flex-1 border-b border-[#bbb]" />
    </div>

    <div className="h-[17px] flex items-center justify-between text-[8px] text-[#222]">
      <div className="flex items-center pl-[4px]">
        <button type="button" className="flex items-center gap-[2px] pr-[9px] border-r border-[#bbb] leading-[11px]">
          <Svg className="w-[9px] h-[9px]"><path d="M3 7V2h6v5M1 7h14v8H1zM8 9v4M6 11h4" stroke="#444" strokeWidth="1.300" /></Svg>
          Lock
        </button>
        <span className="pl-[7px]">PANEL ROOT</span>
      </div>
      <span className="h-[13px] px-[2px] leading-[12px] bg-[#5bd34a] border border-[#43a037]">ACTIVE</span>
    </div>

    <div className="flex-1 flex border-t border-[#bbb]">
      <main className="flex-1 min-w-0 bg-white">
        <div className="flex items-start">
          <div className="pl-[2px] pr-[3px] pt-px flex flex-col gap-[2px]">
            <BreakerGroup id="BK1" />
            <BusGroup title="Bus 1: Measurements" rowSelected />
          </div>
          <CaptureWidget />
          <div className="pl-[2px] pr-1 pt-px flex flex-col items-end gap-[2px]">
            <div className="pr-[3px]"><BreakerGroup id="BK2" /></div>
            <BusGroup title="Bus 2: Measurements" />
          </div>
        </div>
        <Steps />
      </main>
      <div className="w-[10px] flex flex-col bg-[#e0e0e0] border-l border-[#ccc]">
        <Arrow dir="up" />
        <div className="h-[144px] bg-[#fafafa] border-b border-[#ccc]" />
        <div className="flex-1" />
        <Arrow dir="down" />
      </div>
    </div>
    <div className="h-[10px] flex bg-[#e0e0e0] pr-[10px]">
      <Arrow dir="left" />
      <div className="w-[120px] bg-[#fafafa] border-r border-[#ccc]" />
      <div className="flex-1" />
      <Arrow dir="right" />
    </div>

    <div className="flex pt-[2px] px-[3px] gap-[9px]">
      <div className="w-[327px]">
        <DockTitle title="Message Log" />
        <div className="flex h-[49px]">
          <div className="w-[17px] pt-[2px] flex flex-col gap-2">
            <button type="button" aria-label="Clear log">
              <Svg className="w-[9px] h-[10px] ml-[3px]"><path d="M1 2h14v3H1zM3 5v9h10V5" stroke="#444" strokeWidth="1.600" /></Svg>
            </button>
            <button type="button" aria-label="Scroll to end">
              <Svg className="w-[9px] h-[10px] ml-[3px]"><path d="M8 1v10M4 8l4 4 4-4M3 15h10" stroke="#333" strokeWidth="1.800" /></Svg>
            </button>
          </div>
          <div className="flex-1 flex border border-[#bbb] bg-white min-w-0">
            <div className="flex-1 flex flex-col justify-end overflow-hidden pl-[2px] pb-[3px] text-[7px] leading-[10px] text-[#2f8f2f] whitespace-pre font-['DejaVu_Sans_Mono',monospace]">
              <div>{"['ON STOP' HANDLER EXECUTOR] 'RESET RELAY'  'On Stop' handler execut"}</div>
              <div>ion finished.</div>
              <div className="text-[#222]">[18:41:16] :</div>
              <div>{"['ON STOP' HANDLER EXECUTOR] Handlers execution finished."}</div>
              <div><span className="text-[#222]">[18:41:16] : </span>Simulation successfully stopped.</div>
            </div>
            <DockScroll />
          </div>
        </div>
      </div>
      <div className="flex-1 min-w-0">
        <DockTitle title="History View" />
        <div className="flex h-[49px] border border-[#bbb] bg-white">
          <ul className="flex-1 text-[8px] leading-[11px] text-[#222]">
            {history.map((h, i) => (
              <li key={i} className={clsx('pl-px', i === 3 && 'bg-[#d9e2fb]')}>{h}</li>
            ))}
          </ul>
          <DockScroll />
        </div>
      </div>
    </div>

    <footer className="h-[22px] flex items-center justify-end gap-1 text-[8px] text-[#222] whitespace-nowrap">
      <div className="h-[17px] flex items-center gap-[2px] px-[2px] border border-[#ccc]">
        {['TSO', 'WER'].map(s => <span key={s} className="h-[13px] leading-[12px] w-[21px] text-center border border-[#ccc]">{s}</span>)}
      </div>
      <div className="h-[17px] flex items-center gap-[2px] px-[3px] border border-[#ccc]">
        {['EXC', 'CIO', 'SLD', 'AO', 'DTV', 'PSU'].map(s => (
          <span key={s} className="h-[13px] leading-[12px] w-[19px] text-center border border-[#ccc]">{s}</span>
        ))}
        <span className="px-[2px] font-bold border-r border-[#ccc]">00:00:00:00</span>
        <Svg className="w-[8px] h-[8px] mx-[5px]"><path d="M3 1l10 7-10 7z" fill="#4fd23a" /></Svg>
        <span className="pr-[6px] font-bold">REAL-TIME MODE</span>
      </div>
    </footer>
  </section>
);

const App = () => (
  <div className="min-h-screen flex font-['Lato',sans-serif]">
    <QuickSetWindow />
    <ScadaWindow />
  </div>
);

export default App;
